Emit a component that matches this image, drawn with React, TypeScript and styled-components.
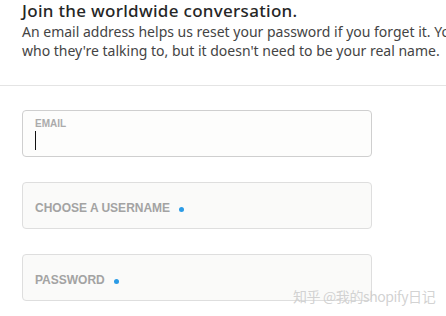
import styled, { createGlobalStyle } from 'styled-components';

const GlobalStyle = createGlobalStyle`
  html, body {
    margin: 0;
    padding: 0;
    background: #fff;
  }
  body {
    font-family: 'Noto Sans', 'Open Sans', sans-serif;
    width: 446px;
    height: 316px;
    overflow: hidden;
  }
`;

const Page = styled.div`
  position: relative;
  width: 446px;
  height: 316px;
  overflow: hidden;
`;

const Intro = styled.header`
  padding: 0 0 0 22px;
  height: 86px;
  border-bottom: 1px solid #e4e4e4;
  box-sizing: border-box;
  white-space: nowrap;
  overflow: hidden;
`;

const Title = styled.h2`
  margin: 0;
  font-size: 17px;
  line-height: 22px;
  font-weight: 500;
  color: #262626;
  letter-spacing: 0.3px;
`;

const Lead = styled.p`
  margin: 0;
  font-size: 14px;
  line-height: 19px;
  color: #444;
`;

const Form = styled.form`
  display: flex;
  flex-direction: column;
  gap: 25px;
  padding: 24px 0 0 22px;
`;

const Field = styled.div<{ focused?: boolean }>`
  position: relative;
  box-sizing: border-box;
  width: 350px;
  height: 47px;
  border: 1px solid ${({ focused }) => (focused ? '#cfcfcf' : '#dedede')};
  border-radius: 4px;
  background: ${({ focused }) => (focused ? '#fdfdfc' : '#fafaf9')};
  padding: 0 12px;
  display: flex;
  flex-direction: column;
  justify-content: center;
`;

const SmallLabel = styled.label`
  font-family: 'Liberation Sans', Arial, sans-serif;
  font-size: 10px;
  font-weight: 700;
  color: #ababab;
  line-height: 11px;
  margin-top: 1px;
`;

const Caret = styled.span`
  display: block;
  width: 1px;
  height: 19px;
  margin-top: 2px;
  background: #111;
`;

const Placeholder = styled.label`
  display: flex;
  align-items: center;
  gap: 9px;
  font-family: 'Liberation Sans', Arial, sans-serif;
  font-size: 12px;
  font-weight: 700;
  color: #a3a3a3;
  margin-top: 5px;
`;

const Required = styled.span`
  width: 5px;
  height: 5px;
  border-radius: 50%;
  background: #2b9be6;
  margin-top: 2px;
`;

const Watermark = styled.div`
  position: absolute;
  left: 293px;
  top: 286px;
  font-family: 'Noto Sans CJK SC', sans-serif;
  font-size: 14px;
  color: rgba(205, 205, 205, 0.9);
  letter-spacing: -0.4px;
  white-space: pre;
`;

export default function App() {
  return (
    <Page>
      <GlobalStyle />
      <Intro>
        <Title>Join the worldwide conversation.</Title>
        <Lead>
          An email address helps us reset your password if you forget it. You&apos;ll
          <br />
          who they&apos;re talking to, but it doesn&apos;t need to be your real name.
        </Lead>
      </Intro>
      <Form>
        <Field focused>
          <SmallLabel>EMAIL</SmallLabel>
          <Caret />
        </Field>
        <Field>
          <Placeholder>
            CHOOSE A USERNAME <Required />
          </Placeholder>
        </Field>
        <Field>
          <Placeholder>
            PASSWORD <Required />
          </Placeholder>
        </Field>
      </Form>
      <Watermark>知乎 @我的shopify日记</Watermark>
    </Page>
  );
}
